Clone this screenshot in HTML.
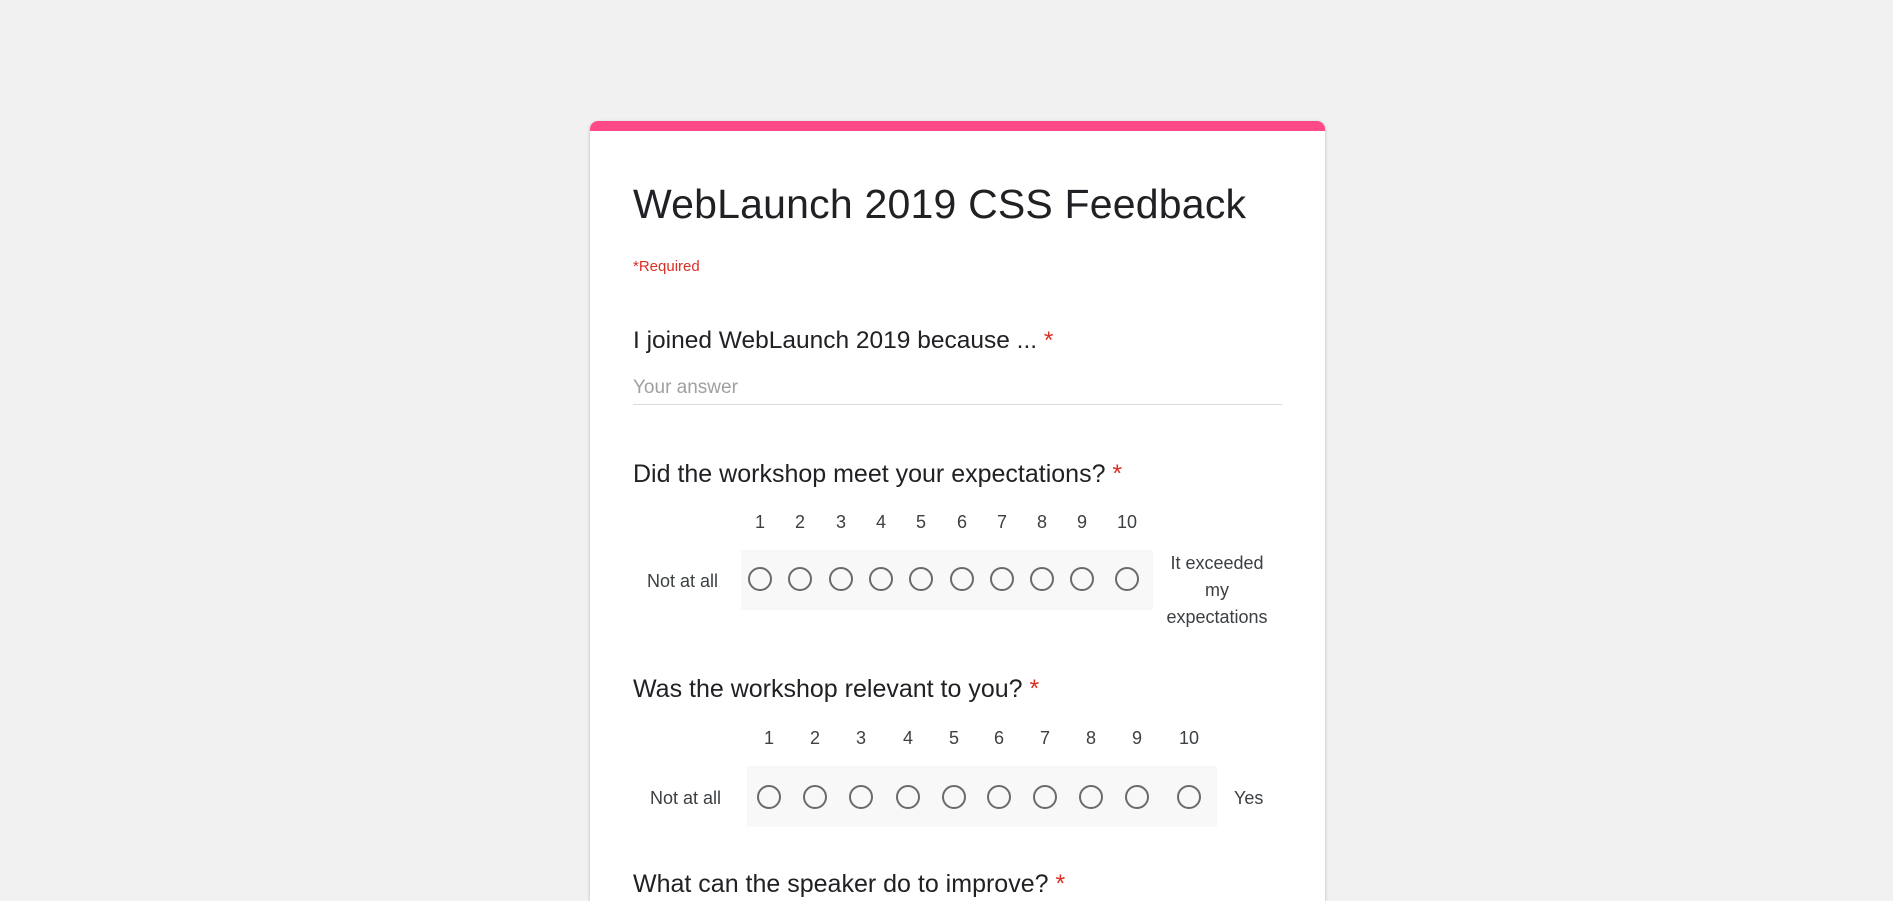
<!DOCTYPE html>
<html><head><meta charset="utf-8"><style>
html,body{margin:0;padding:0;width:1893px;height:890px;overflow:hidden;background:#f1f1f1;font-family:"Liberation Sans",sans-serif;}
.card{position:absolute;left:590px;top:121px;width:735px;height:780px;background:#fff;border-radius:8px 8px 0 0;box-shadow:0 1px 3px rgba(0,0,0,.25);overflow:hidden}
.bar{position:absolute;left:0;top:0;width:100%;height:10px;background:#ff4a87}
.t{position:absolute;line-height:1;white-space:nowrap;color:#202124}
.star{color:#d93025}
.box{position:absolute;background:#f8f8f8}
.r{position:absolute;width:20px;height:20px;border:2.5px solid #6a6a6a;border-radius:50%}
.n{position:absolute;font-size:18px;line-height:1;color:#3c4043;transform:translateX(-50%)}
.l{position:absolute;font-size:18px;line-height:1;color:#3c4043}
</style></head><body>
<div class="card"><div class="bar"></div></div>
<div class="t" style="left:633px;top:184px;font-size:41px;letter-spacing:0.2px">WebLaunch 2019 CSS Feedback</div>
<div class="t" style="left:633px;top:259px;font-size:15px;color:#d93025">*Required</div>
<div class="t" style="left:633px;top:329px;font-size:24.5px">I joined WebLaunch 2019 because ... <span class="star">*</span></div>
<div class="t" style="left:633px;top:378px;font-size:19px;color:#a0a0a0">Your answer</div>
<div style="position:absolute;left:633px;top:404px;width:649px;height:1px;background:#dadada"></div>
<div class="t" style="left:633px;top:462px;font-size:25px">Did the workshop meet your expectations? <span class="star">*</span></div>

<div class="box" style="left:741px;top:550px;width:412px;height:60px"></div>
<div class="l" style="left:647px;top:572px">Not at all</div>
<div class="l" style="left:1157px;top:550px;width:120px;text-align:center;line-height:27px">It exceeded<br>my<br>expectations</div>

<div class="box" style="left:747px;top:766px;width:470px;height:61px"></div>
<div class="t" style="left:633px;top:677px;font-size:25px">Was the workshop relevant to you? <span class="star">*</span></div>
<div class="l" style="left:650px;top:789px">Not at all</div>
<div class="l" style="left:1234px;top:789px">Yes</div>
<div class="t" style="left:633px;top:872px;font-size:25px">What can the speaker do to improve? <span class="star">*</span></div>

<div id="g"></div>
<script>
var a=[760,800,841,881,921,962,1002,1042,1082,1127],b=[769,815,861,908,954,999,1045,1091,1137,1189],h='';
for(var i=0;i<10;i++){
h+='<div class="n" style="left:'+a[i]+'px;top:513px">'+(i+1)+'</div>';
h+='<div class="r" style="left:'+(a[i]-12)+'px;top:567px"></div>';
h+='<div class="n" style="left:'+b[i]+'px;top:729px">'+(i+1)+'</div>';
h+='<div class="r" style="left:'+(b[i]-12)+'px;top:785px"></div>';
}
document.getElementById('g').innerHTML=h;
</script>
</body></html>
